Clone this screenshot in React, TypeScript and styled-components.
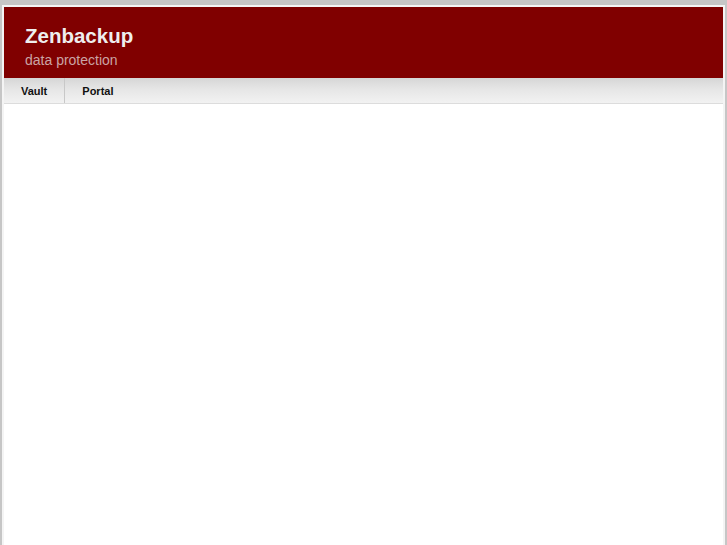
import React from 'react';
import styled, {createGlobalStyle} from 'styled-components';

const GlobalStyle = createGlobalStyle`
  html, body {
    margin: 0;
    padding: 0;
    height: 100%;
    background: #c6c6c6;
    font-family: "Liberation Sans", Arial, sans-serif;
  }
  #root {
    height: 100%;
  }
`;

const Page = styled.div`
  display: flex;
  flex-direction: column;
  box-sizing: border-box;
  height: calc(100% - 5px);
  margin: 5px 2px 0 2px;
  border: 2px solid #f4f4f4;
  border-bottom: none;
  background: #fff;
`;

const Header = styled.header`
  box-sizing: border-box;
  height: 71px;
  padding: 17px 0 0 21px;
  background: #800000;
`;

const Title = styled.h1`
  margin: 0;
  font-size: 20.5px;
  font-weight: bold;
  line-height: 24px;
  color: #eeeeee;
`;

const Subtitle = styled.div`
  margin-top: 4px;
  font-size: 14px;
  line-height: 17px;
  color: #cba4a4;
`;

const Nav = styled.nav`
  display: flex;
  align-items: stretch;
  height: 25px;
  border-bottom: 1px solid #dcdcdc;
  background: linear-gradient(to bottom, #d6d6d6 0%, #e6e6e6 45%, #f2f2f2 100%);
`;

const NavItem = styled.a<{$last?: boolean}>`
  display: flex;
  align-items: center;
  padding: 0 17px;
  border-right: ${p => (p.$last ? 'none' : '1px solid #c8c8c8')};
  font-size: 11px;
  font-weight: bold;
  color: #111;
  text-decoration: none;
`;

const Content = styled.main`
  flex: 1;
  background: #fff;
`;

const App = () => {
    return (
        <>
            <GlobalStyle/>
            <Page>
                <Header>
                    <Title>Zenbackup</Title>
                    <Subtitle>data protection</Subtitle>
                </Header>
                <Nav>
                    <NavItem href="#">Vault</NavItem>
                    <NavItem href="#" $last>Portal</NavItem>
                </Nav>
                <Content/>
            </Page>
        </>
    );
};

export default App;
